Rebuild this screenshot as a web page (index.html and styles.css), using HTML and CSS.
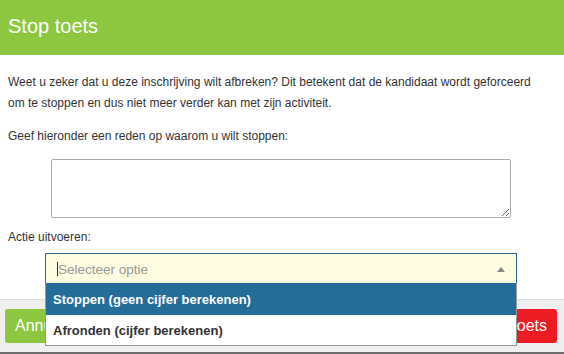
FILE: index.html
```html
<!DOCTYPE html>
<html lang="nl">
<head>
<meta charset="utf-8">
<title>Stop toets</title>
<link rel="stylesheet" href="styles.css">
</head>
<body>
<div class="modal">
  <header class="modal-header">
    <h1 class="modal-title">Stop toets</h1>
  </header>
  <div class="modal-body">
    <p class="para">Weet u zeker dat u deze inschrijving wilt afbreken? Dit betekent dat de kandidaat wordt geforceerd om te stoppen en dus niet meer verder kan met zijn activiteit.</p>
    <p class="para">Geef hieronder een reden op waarom u wilt stoppen:</p>
    <div class="field-wrap">
      <textarea class="reason"></textarea>
    </div>
    <p class="label">Actie uitvoeren:</p>
    <div class="select-wrap">
      <div class="select">
        <span class="cursor"></span>
        <span class="placeholder">Selecteer optie</span>
        <span class="arrow"></span>
      </div>
      <ul class="dropdown">
        <li class="option active">Stoppen (geen cijfer berekenen)</li>
        <li class="option">Afronden (cijfer berekenen)</li>
      </ul>
    </div>
  </div>
  <footer class="modal-footer">
    <button class="btn btn-green">Annuleren</button>
    <button class="btn btn-red">Stop toets</button>
  </footer>
</div>
</body>
</html>
```

FILE: styles.css
```css
* { box-sizing: border-box; }
html, body {
  margin: 0;
  padding: 0;
  background: #fff;
}
body {
  font-family: "Liberation Sans", Arial, Helvetica, sans-serif;
  color: #333;
  width: 564px;
  height: 354px;
  overflow: hidden;
}
.modal {
  display: flex;
  flex-direction: column;
  height: 354px;
  border-bottom: 2px solid #6e6e6e;
}
.modal-header {
  background: #8dc63f;
  height: 55px;
  display: flex;
  align-items: center;
  padding: 0 8px;
}
.modal-title {
  margin: 0;
  color: #fff;
  font-size: 20px;
  font-weight: normal;
  line-height: 24px;
  padding-bottom: 3px;
}
.modal-body {
  flex: 1;
  padding: 17px 8px 0;
}
.para {
  margin: 0 0 12px;
  padding-right: 10px;
  font-size: 12px;
  line-height: 21px;
}
.field-wrap {
  display: flex;
  justify-content: center;
  padding-right: 2px;
}
.reason {
  display: block;
  width: 460px;
  height: 59px;
  border: 1px solid #aaa;
  border-radius: 2px;
  margin: 0;
  padding: 4px;
  resize: vertical;
  background: #fff;
}
.label {
  margin: 9px 0 0;
  font-size: 12px;
  line-height: 21px;
}
.select-wrap {
  position: relative;
  width: 472px;
  margin: 5px auto 0;
  left: -1px;
  z-index: 2;
}
.select {
  height: 31px;
  border: 1px solid #2a6a99;
  border-bottom: none;
  background: #fffde1;
  display: flex;
  align-items: center;
  padding: 0 11px;
}
.cursor {
  width: 1px;
  height: 14px;
  background: #333;
}
.placeholder {
  font-size: 13.5px;
  color: #999;
  flex: 1;
}
.arrow {
  width: 0;
  height: 0;
  border-left: 4.5px solid transparent;
  border-right: 4.5px solid transparent;
  border-bottom: 5px solid #888;
}
.dropdown {
  position: absolute;
  left: 0;
  right: 0;
  top: 30px;
  margin: 0;
  padding: 0;
  list-style: none;
  background: #fff;
  border: 1px solid #999;
  border-top: none;
}
.option {
  height: 32px;
  display: flex;
  align-items: center;
  padding: 0 7px;
  font-size: 13px;
  font-weight: bold;
  color: #333;
}
.option + .option {
  height: 30px;
}
.option.active {
  background: #256d99;
  color: #fff;
}
.modal-footer {
  height: 53px;
  background: #efefef;
  border-top: 1px solid #dcdcdc;
  display: flex;
  justify-content: space-between;
  align-items: center;
  padding: 0 7px 0 5px;
}
.btn {
  height: 34px;
  border: none;
  border-radius: 3px;
  color: #fff;
  font-family: "Liberation Sans", Arial, Helvetica, sans-serif;
  font-size: 16px;
  padding: 0 10px;
}
.btn-green { background: #8dc63f; }
.btn-red { background: #ed1c24; }
```
